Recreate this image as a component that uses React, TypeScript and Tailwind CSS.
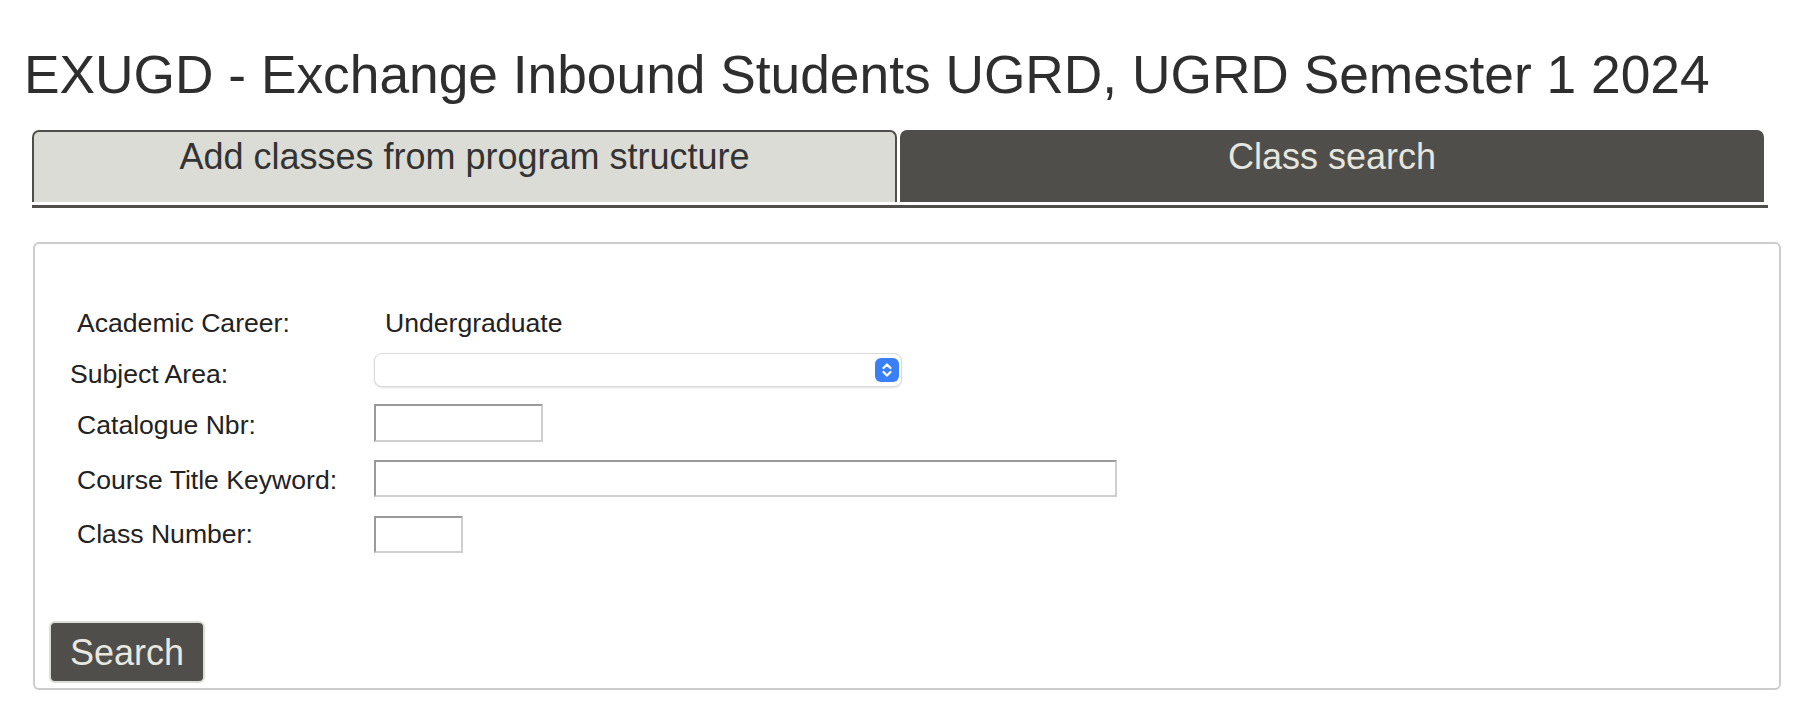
import { useState } from 'react';

type Tab = 'structure' | 'search';

function Stepper() {
  return (
    <div className="flex h-[24px] w-[24px] items-center justify-center rounded-[6px] bg-[#3a7ff6]">
      <svg width="24" height="24" viewBox="0 0 24 24" fill="none">
        <path d="M8.5 10 L12 6.5 L15.5 10" stroke="white" strokeWidth="2.2" strokeLinecap="round" strokeLinejoin="round" />
        <path d="M8.5 14 L12 17.5 L15.5 14" stroke="white" strokeWidth="2.2" strokeLinecap="round" strokeLinejoin="round" />
      </svg>
    </div>
  );
}

const inputBorder = 'border-2 border-t-[#9a9a9a] border-l-[#9a9a9a] border-b-[#cfcfcf] border-r-[#cfcfcf] bg-white outline-none';

function App() {
  const [tab, setTab] = useState<Tab>('search');
  const [catalogue, setCatalogue] = useState('');
  const [keyword, setKeyword] = useState('');
  const [classNbr, setClassNbr] = useState('');

  const tabClass = (active: boolean) =>
    active
      ? 'h-[72px] rounded-t-[7px] border-2 border-b-0 border-[#4f4e4a] bg-[#4f4e4a] pt-[4px] text-center text-[36px] leading-[41px] text-[#e6e6df]'
      : 'h-[72px] rounded-t-[7px] border-2 border-b-0 border-[#4f4e4a] bg-[#dcdcd6] pt-[4px] text-center text-[36px] leading-[41px] text-[#333333]';

  return (
    <div className="min-h-screen bg-white font-['Liberation_Sans',Arial,sans-serif]">
      <h1 className="pl-[24px] pt-[44px] text-[53.3px] leading-[61px] text-[#2e2e2e]">
        EXUGD - Exchange Inbound Students UGRD, UGRD Semester 1 2024
      </h1>

      <div className="ml-[32px] mt-[25px] w-[1736px]">
        <div className="flex gap-[3px]">
          <div className={`w-[865px] cursor-pointer ${tabClass(tab === 'structure')}`} onClick={() => setTab('structure')}>
            Add classes from program structure
          </div>
          <div className={`w-[864px] cursor-pointer ${tabClass(tab === 'search')}`} onClick={() => setTab('search')}>
            Class search
          </div>
        </div>
        <div className="mt-[3px] h-[3px] bg-[#4f4e4a]" />
      </div>

      <div className="ml-[33px] mt-[34px] flex h-[448px] w-[1748px] flex-col rounded-[6px] border-2 border-[#cccccc] pt-[62px] text-[26.6px] leading-[31px] text-[#222222]">
        <div className="flex h-[35px] items-center">
          <div className="w-[339px] pl-[42px]">Academic Career:</div>
          <div className="pl-[11px]">Undergraduate</div>
        </div>

        <div className="mt-[12px] flex h-[34px] items-center">
          <div className="w-[339px] pl-[35px] pt-[8px]">Subject Area:</div>
          <div className="flex h-[34px] w-[528px] items-center justify-end rounded-[8px] border border-[#dadada] bg-white pr-[2px] shadow-[0_1px_2px_rgba(0,0,0,0.12)]">
            <Stepper />
          </div>
        </div>

        <div className="mt-[17px] flex h-[38px] items-center">
          <div className="w-[339px] pl-[42px] pt-[4px]">Catalogue Nbr:</div>
          <input className={`h-[38px] w-[169px] ${inputBorder}`} value={catalogue} onChange={(e) => setCatalogue(e.target.value)} />
        </div>

        <div className="mt-[18px] flex h-[37px] items-center">
          <div className="w-[339px] pl-[42px] pt-[4px]">Course Title Keyword:</div>
          <input className={`h-[37px] w-[743px] ${inputBorder}`} value={keyword} onChange={(e) => setKeyword(e.target.value)} />
        </div>

        <div className="mt-[19px] flex h-[37px] items-center">
          <div className="w-[339px] pl-[42px]">Class Number:</div>
          <input className={`h-[37px] w-[89px] ${inputBorder}`} value={classNbr} onChange={(e) => setClassNbr(e.target.value)} />
        </div>

        <button className="ml-[14px] mt-[68px] h-[62px] w-[156px] rounded-[6px] border-2 border-[#dcdcd6] bg-[#4f4e4a] text-[36px] leading-[41px] text-[#e8e8e0]">
          Search
        </button>
      </div>
    </div>
  );
}

export default App;
